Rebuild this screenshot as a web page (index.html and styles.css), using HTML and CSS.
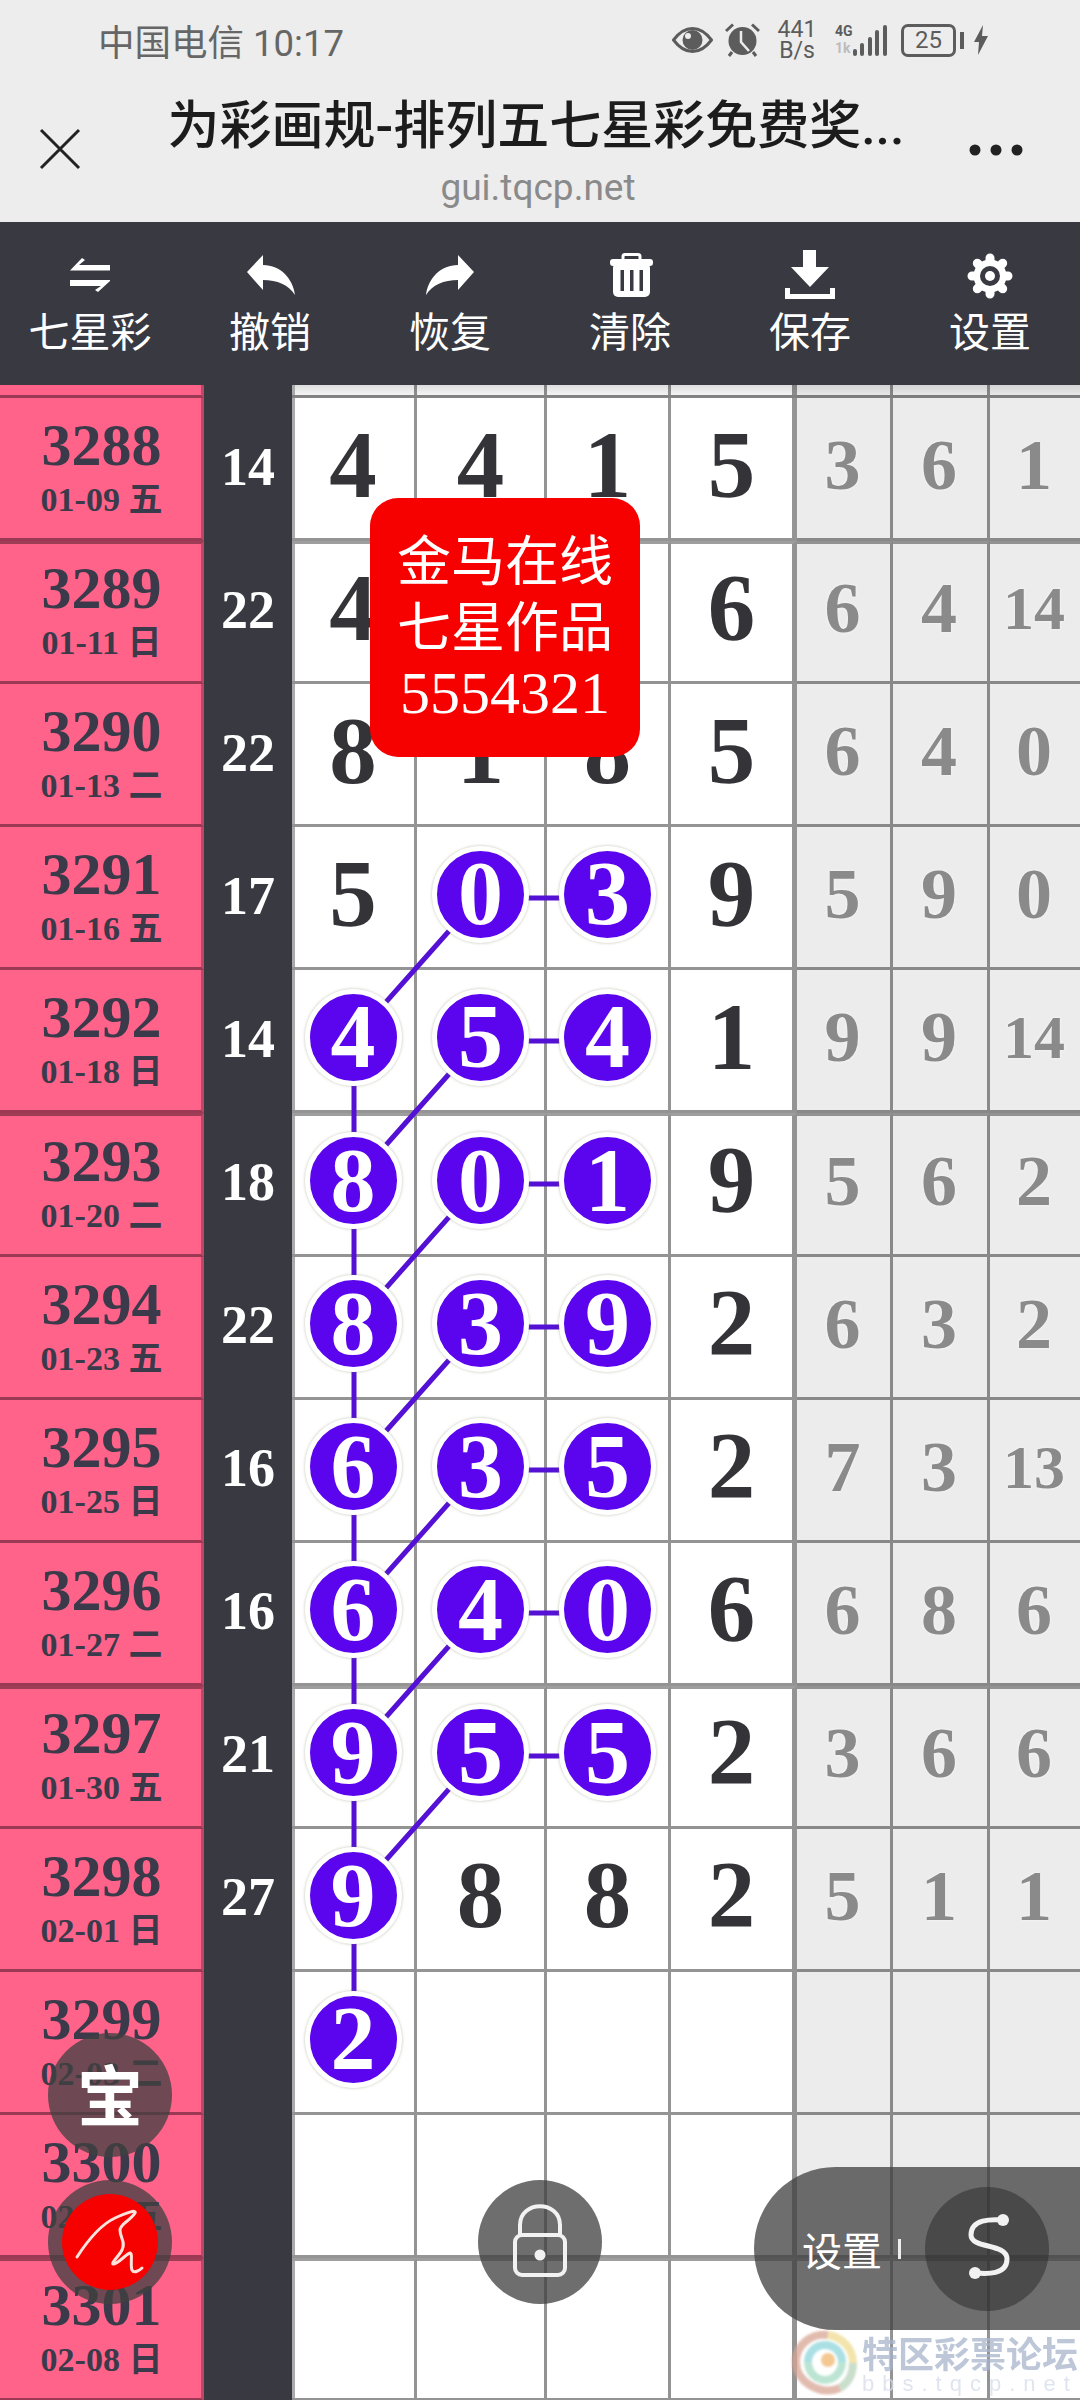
FILE: index.html
```html
<!DOCTYPE html>
<html lang="zh-CN">
<head>
<meta charset="utf-8">
<title>为彩画规</title>
<link rel="stylesheet" href="styles.css">
</head>
<body>

<!-- browser chrome -->
<header class="chrome">
  <div class="status">
    <span class="carrier">中国电信 10:17</span>
    <div class="status-icons">
      <svg class="ic-eye" width="41" height="26" viewBox="0 0 41 26"><path d="M1.5 13C9 3 15 1.5 20.5 1.5S32 3 39.5 13C32 23 26 24.500 20.5 24.500S9 23 1.500 13Z" fill="none" stroke="#5c5c5c" stroke-width="3"/><circle cx="20.500" cy="13" r="10" fill="#5c5c5c"/><circle cx="16" cy="9" r="3" fill="#ededed"/></svg>
      <svg class="ic-alarm" width="35" height="34" viewBox="0 0 35 34"><circle cx="17.500" cy="18" r="14" fill="#5c5c5c"/><path d="M1 8L8 1.500M34 8L27 1.500M7 29L4 33M28 29L31 33" stroke="#5c5c5c" stroke-width="3"/><path d="M16 8V19L24 28" fill="none" stroke="#ededed" stroke-width="2.500"/></svg>
      <div class="speed"><span>441</span><span>B/s</span></div>
      <div class="net">
        <div class="net-labels"><span>4G</span><span class="faded">1k</span></div>
        <svg width="35" height="32" viewBox="0 0 35 32"><g fill="#5c5c5c"><rect x="0" y="24" width="4" height="7" rx="2"/><rect x="7" y="18" width="4" height="13" rx="2"/><rect x="15" y="12" width="4" height="19" rx="2"/><rect x="22" y="5" width="4" height="26" rx="2"/><rect x="30" y="0" width="4" height="31" rx="2"/></g></svg>
      </div>
      <div class="battery">25</div>
      <div class="battery-nub"></div>
      <svg class="ic-bolt" width="14" height="30" viewBox="0 0 14 30"><path d="M9 0L0 17H5L4 30L14 11H8Z" fill="#5c5c5c"/></svg>
    </div>
  </div>
  <div class="titlebar">
    <div class="bar-side">
      <svg width="42" height="42" viewBox="0 0 42 42"><path d="M2 2L40 40M40 2L2 40" stroke="#222" stroke-width="3"/></svg>
    </div>
    <div class="bar-title">
      <div class="page-title">为彩画规-排列五七星彩免费奖...</div>
      <div class="page-host">gui.tqcp.net</div>
    </div>
    <div class="bar-side">
      <svg width="54" height="12" viewBox="0 0 54 12"><g fill="#222"><circle cx="6" cy="6" r="5.500"/><circle cx="27" cy="6" r="5.500"/><circle cx="48" cy="6" r="5.500"/></g></svg>
    </div>
  </div>
</header>

<!-- toolbar -->
<nav class="toolbar">
  <div class="tool">
    <svg width="60" height="50" viewBox="0 0 60 50"><g transform="translate(10 8)" fill="#fff"><path d="M0 12.500L12 0L15 2L9 7H40V12.500Z"/><path d="M0 22H40V23L28 34L25 32L31 28H0Z"/></g></svg>
    <span>七星彩</span>
  </div>
  <div class="tool">
    <svg width="60" height="50" viewBox="0 0 60 50"><path transform="translate(7 5)" d="M0 17L16 0V10C34 10 46 24 48 40C42 30 30 25 16 25V35Z" fill="#fff"/></svg>
    <span>撤销</span>
  </div>
  <div class="tool">
    <svg width="60" height="50" viewBox="0 0 60 50"><path transform="translate(54 5) scale(-1 1)" d="M0 17L16 0V10C34 10 46 24 48 40C42 30 30 25 16 25V35Z" fill="#fff"/></svg>
    <span>恢复</span>
  </div>
  <div class="tool">
    <svg width="60" height="50" viewBox="0 0 60 50"><g transform="translate(10 3)"><rect x="3" y="10" width="37" height="34" rx="5" fill="#fff"/><rect x="0" y="6" width="43" height="7" rx="3" fill="#fff"/><path d="M13 7V3.500Q13 1.500 15 1.500H28Q30 1.500 30 3.500V7" fill="none" stroke="#fff" stroke-width="3"/><g fill="#393941"><rect x="10.500" y="17" width="3.500" height="21"/><rect x="20" y="17" width="3.500" height="21"/><rect x="29.500" y="17" width="3.500" height="21"/></g></g></svg>
    <span>清除</span>
  </div>
  <div class="tool">
    <svg width="60" height="50" viewBox="0 0 60 50"><g transform="translate(5 0)" fill="#fff"><path d="M18 0H31V17H44L25 37L6 17H18Z"/><path d="M0 38H5V44H45V38H50V49H0Z"/></g></svg>
    <span>保存</span>
  </div>
  <div class="tool">
    <svg width="60" height="50" viewBox="0 0 60 50"><g transform="translate(30 26)"><circle r="16.500" fill="#fff"/><g stroke="#fff" stroke-width="9" stroke-linecap="round"><path d="M0 -18V18M-18 0H18M-12.700 -12.700L12.700 12.700M-12.700 12.700L12.700 -12.700"/></g><circle r="10" fill="#393941"/><circle r="5" fill="#fff"/></g></svg>
    <span>设置</span>
  </div>
</nav>

<!-- chart -->
<main class="board">
  <svg class="links" width="1080" height="2015" viewBox="0 0 1080 2015">
    <path d="M354 653V1655"/>
    <path d="M481 513H608M481 656H608M481 799H608M481 942H608M481 1085H608M481 1228H608M481 1371H608"/>
    <path d="M354 653L481 510M354 796L481 653M354 939L481 796M354 1082L481 939M354 1225L481 1082M354 1368L481 1225M354 1511L481 1368"/>
  </svg>

  <div class="row stub">
    <div class="issue"></div><div class="sum"></div><div class="cell"></div><div class="cell"></div><div class="cell"></div><div class="cell edge"></div><div class="cell tail"></div><div class="cell tail"></div><div class="cell tail end"></div>
  </div>

  <div class="row thick">
    <div class="issue"><b>3288</b><span>01-09 五</span></div><div class="sum">14</div>
    <div class="cell">4</div><div class="cell">4</div><div class="cell">1</div><div class="cell edge">5</div>
    <div class="cell tail">3</div><div class="cell tail">6</div><div class="cell tail end">1</div>
  </div>
  <div class="row">
    <div class="issue"><b>3289</b><span>01-11 日</span></div><div class="sum">22</div>
    <div class="cell">4</div><div class="cell"></div><div class="cell"></div><div class="cell edge">6</div>
    <div class="cell tail">6</div><div class="cell tail">4</div><div class="cell tail end two">14</div>
  </div>
  <div class="row">
    <div class="issue"><b>3290</b><span>01-13 二</span></div><div class="sum">22</div>
    <div class="cell">8</div><div class="cell">1</div><div class="cell">8</div><div class="cell edge">5</div>
    <div class="cell tail">6</div><div class="cell tail">4</div><div class="cell tail end">0</div>
  </div>
  <div class="row">
    <div class="issue"><b>3291</b><span>01-16 五</span></div><div class="sum">17</div>
    <div class="cell">5</div><div class="cell"><span class="ball">0</span></div><div class="cell"><span class="ball">3</span></div><div class="cell edge">9</div>
    <div class="cell tail">5</div><div class="cell tail">9</div><div class="cell tail end">0</div>
  </div>
  <div class="row thick">
    <div class="issue"><b>3292</b><span>01-18 日</span></div><div class="sum">14</div>
    <div class="cell"><span class="ball">4</span></div><div class="cell"><span class="ball">5</span></div><div class="cell"><span class="ball">4</span></div><div class="cell edge">1</div>
    <div class="cell tail">9</div><div class="cell tail">9</div><div class="cell tail end two">14</div>
  </div>
  <div class="row">
    <div class="issue"><b>3293</b><span>01-20 二</span></div><div class="sum">18</div>
    <div class="cell"><span class="ball">8</span></div><div class="cell"><span class="ball">0</span></div><div class="cell"><span class="ball">1</span></div><div class="cell edge">9</div>
    <div class="cell tail">5</div><div class="cell tail">6</div><div class="cell tail end">2</div>
  </div>
  <div class="row">
    <div class="issue"><b>3294</b><span>01-23 五</span></div><div class="sum">22</div>
    <div class="cell"><span class="ball">8</span></div><div class="cell"><span class="ball">3</span></div><div class="cell"><span class="ball">9</span></div><div class="cell edge">2</div>
    <div class="cell tail">6</div><div class="cell tail">3</div><div class="cell tail end">2</div>
  </div>
  <div class="row">
    <div class="issue"><b>3295</b><span>01-25 日</span></div><div class="sum">16</div>
    <div class="cell"><span class="ball">6</span></div><div class="cell"><span class="ball">3</span></div><div class="cell"><span class="ball">5</span></div><div class="cell edge">2</div>
    <div class="cell tail">7</div><div class="cell tail">3</div><div class="cell tail end two">13</div>
  </div>
  <div class="row thick">
    <div class="issue"><b>3296</b><span>01-27 二</span></div><div class="sum">16</div>
    <div class="cell"><span class="ball">6</span></div><div class="cell"><span class="ball">4</span></div><div class="cell"><span class="ball">0</span></div><div class="cell edge">6</div>
    <div class="cell tail">6</div><div class="cell tail">8</div><div class="cell tail end">6</div>
  </div>
  <div class="row">
    <div class="issue"><b>3297</b><span>01-30 五</span></div><div class="sum">21</div>
    <div class="cell"><span class="ball">9</span></div><div class="cell"><span class="ball">5</span></div><div class="cell"><span class="ball">5</span></div><div class="cell edge">2</div>
    <div class="cell tail">3</div><div class="cell tail">6</div><div class="cell tail end">6</div>
  </div>
  <div class="row">
    <div class="issue"><b>3298</b><span>02-01 日</span></div><div class="sum">27</div>
    <div class="cell"><span class="ball">9</span></div><div class="cell">8</div><div class="cell">8</div><div class="cell edge">2</div>
    <div class="cell tail">5</div><div class="cell tail">1</div><div class="cell tail end">1</div>
  </div>
  <div class="row">
    <div class="issue"><b>3299</b><span>02-03 二</span></div><div class="sum"></div>
    <div class="cell"><span class="ball">2</span></div><div class="cell"></div><div class="cell"></div><div class="cell edge"></div>
    <div class="cell tail"></div><div class="cell tail"></div><div class="cell tail end"></div>
  </div>
  <div class="row thick">
    <div class="issue"><b>3300</b><span>02-06 五</span></div><div class="sum"></div>
    <div class="cell"></div><div class="cell"></div><div class="cell"></div><div class="cell edge"></div>
    <div class="cell tail"></div><div class="cell tail"></div><div class="cell tail end"></div>
  </div>
  <div class="row">
    <div class="issue"><b>3301</b><span>02-08 日</span></div><div class="sum"></div>
    <div class="cell"></div><div class="cell"></div><div class="cell"></div><div class="cell edge"></div>
    <div class="cell white"></div><div class="cell white"></div><div class="cell white end"></div>
  </div>
</main>

<!-- things floating over the chart -->
<div class="sticker">金马在线<br>七星作品<br><span>5554321</span></div>

<div class="float float-bao">宝</div>
<div class="float float-sign">
  <svg width="124" height="124" viewBox="0 0 124 124">
    <circle cx="62" cy="62" r="48" fill="#f60000"/>
    <path d="M29 77C40 60 52 45 67 38C78 33 89 29 87 33C83 40 72 44 72 50C72 58 78 62 74 70C71 76 63 83 65 84C69 85 78 74 82 73C85 73 82 86 84 90C86 94 92 90 94 88" fill="none" stroke="#ffe2dc" stroke-width="3" stroke-linecap="round" stroke-linejoin="round"/>
  </svg>
</div>
<div class="float float-lock">
  <svg width="124" height="124" viewBox="0 0 124 124">
    <g fill="none" stroke="#f2f2f2" stroke-width="4">
      <path d="M42 55V45C42 20 82 20 82 45V55"/>
      <rect x="37" y="55" width="50" height="40" rx="7"/>
    </g>
    <circle cx="62" cy="75" r="5.500" fill="#f2f2f2"/>
  </svg>
</div>

<div class="pill">
  <span class="pill-label">设置</span>
  <span class="pill-tick"></span>
  <span class="pill-knob">
    <svg width="124" height="124" viewBox="0 0 124 124">
      <path d="M78 33C66 32 46 32 46 48C46 62 82 56 82 72C82 88 62 87 50 86" fill="none" stroke="#f2f2f2" stroke-width="5" stroke-linecap="round"/>
      <circle cx="78" cy="33" r="6" fill="#f2f2f2"/>
      <circle cx="50" cy="86" r="6" fill="#f2f2f2"/>
    </svg>
  </span>
</div>

<div class="watermark">
  <svg class="mark-logo" width="68" height="66" viewBox="0 0 68 66">
    <g fill="none">
      <path d="M50 58C30 66 6 52 6 32C6 14 22 3 38 5" stroke="#d9a595" stroke-width="8"/>
      <path d="M38 5C52 7 63 18 63 33" stroke="#efdc92" stroke-width="8"/>
      <path d="M63 33C63 44 58 53 50 58" stroke="#b9d3bb" stroke-width="8"/>
      <path d="M52 32C52 22 44 15 35 15C25 15 18 23 18 32" stroke="#8ed6dc" stroke-width="8"/>
      <path d="M18 32C18 42 26 50 35 50C44 50 52 42 52 32" stroke="#a7dcc4" stroke-width="8"/>
    </g>
    <circle cx="38" cy="30" r="7" fill="#f1b66d"/>
  </svg>
  <div class="mark-text">
    <div class="mark-cn">特区彩票论坛</div>
    <div class="mark-en">bbs.tqcp.net</div>
  </div>
</div>

</body>
</html>
```

FILE: styles.css
```css
* { box-sizing: border-box; }

html, body {
  margin: 0;
  padding: 0;
}

body {
  position: relative;
  width: 1080px;
  height: 2400px;
  overflow: hidden;
  background: #fff;
  font-family: "Liberation Serif", "Noto Sans CJK SC", serif;
}

/* browser chrome */
.chrome {
  height: 222px;
  background: #ededed;
  font-family: Roboto, "Noto Sans CJK SC", sans-serif;
}

.status {
  display: flex;
  justify-content: space-between;
  align-items: center;
  height: 80px;
  padding: 0 92px 0 98px;
  color: #666;
}

.carrier { font-size: 36.5px; }

.status-icons {
  display: flex;
  align-items: center;
  color: #5c5c5c;
}

.ic-eye { margin-right: 12px; }
.ic-alarm { margin-right: 18px; }

.speed {
  display: flex;
  flex-direction: column;
  align-items: center;
  width: 38px;
  margin-right: 19px;
  font-size: 23px;
  line-height: 21px;
}

.net {
  display: flex;
  align-items: flex-end;
  width: 53px;
  margin-right: 13px;
}

.net-labels {
  display: flex;
  flex-direction: column;
  width: 18px;
  font-size: 14px;
  font-weight: 700;
  line-height: 17px;
}

.net-labels .faded { color: #bcbcbc; }

.battery {
  width: 55px;
  height: 33px;
  border: 3px solid #5c5c5c;
  border-radius: 7px;
  font-size: 24px;
  line-height: 27px;
  text-align: center;
}

.battery-nub {
  width: 4px;
  height: 17px;
  margin: 0 10px 0 4px;
  background: #5c5c5c;
}

.titlebar {
  display: grid;
  grid-template-columns: 120px 1fr 120px;
  height: 142px;
}

.bar-side {
  display: flex;
  justify-content: center;
  padding-top: 48px;
}

.bar-side:last-child { padding-top: 64px; padding-right: 48px; }

.bar-title {
  padding: 17px 8px 0 0;
  text-align: center;
}

.page-title {
  font-size: 52px;
  font-weight: 500;
  line-height: 60px;
  color: #1c1c1c;
  white-space: nowrap;
}

.page-host {
  margin-top: 9px;
  padding-left: 4px;
  font-size: 37px;
  line-height: 44px;
  color: #8a8a8a;
}

/* toolbar */
.toolbar {
  display: grid;
  grid-template-columns: repeat(6, 180px);
  height: 163px;
  padding-top: 28px;
  background: #393941;
  font-family: "Noto Sans CJK SC", sans-serif;
  color: #fff;
}

.tool {
  display: flex;
  flex-direction: column;
  align-items: center;
}

.tool span {
  margin-top: 4px;
  font-size: 41px;
  line-height: 50px;
}

/* chart */
.board {
  position: relative;
}

.links {
  position: absolute;
  left: 0;
  top: 0;
  z-index: 1;
}

.links path {
  fill: none;
  stroke: #5410d4;
  stroke-width: 5;
}

.row {
  display: grid;
  grid-template-columns: 204px 88px 125px 130px 124px 126px 96px 97px 90px;
  height: 143.1px;
}

.row.stub { height: 13px; }

.issue,
.sum,
.cell {
  display: flex;
  align-items: center;
  justify-content: center;
}

.issue {
  flex-direction: column;
  padding: 0 0 3px 2px;
  background: #ff6389;
  border-right: 3px solid rgba(90, 30, 50, .4);
  border-bottom: 3px solid rgba(90, 30, 50, .6);
  color: #3b3a4a;
}

.issue b {
  font-size: 60px;
  line-height: 58px;
}

.issue span {
  margin-top: 9px;
  font-size: 34px;
  font-weight: 700;
  line-height: 34px;
}

.sum {
  padding-bottom: 6px;
  background: #393941;
  color: #fff;
  font-size: 54px;
  font-weight: 700;
}

.cell {
  padding-bottom: 6px;
  background: #fff;
  border-right: 3px solid rgba(0, 0, 0, .42);
  border-bottom: 3px solid rgba(0, 0, 0, .42);
  color: #333338;
  font-size: 95px;
  font-weight: 700;
  line-height: 1;
}

.row > .cell:nth-child(3) { box-shadow: inset 3px 0 0 #aaa; }

.cell.edge { border-right-width: 5px; }
.cell.end { border-right: 0; }

.cell.tail {
  padding-right: 2px;
  background: #ececec;
  color: #8a8a8a;
  font-size: 72px;
  text-shadow: 0 0 3px #f8f8f8;
}

.cell.two { font-size: 62px; }

/* every fourth row line is double width, half in each row */
.row.thick + .row .issue,
.row.thick + .row .cell { border-top: 3px solid rgba(0, 0, 0, .38); }

.row.thick + .row .cell { padding-bottom: 9px; }
.row.thick + .row .issue { padding-bottom: 6px; }

.stub .cell { background: linear-gradient(#dedede, #f4f4f4); }
.stub .cell.tail { background: linear-gradient(#d4d4d4, #e8e8e8); }

.ball {
  position: relative;
  z-index: 2;
  display: flex;
  align-items: center;
  justify-content: center;
  width: 97px;
  height: 97px;
  border: 5px solid #fff;
  border-radius: 50%;
  background: #5a05ee;
  box-shadow: 0 0 3px rgba(120, 130, 90, .5);
  color: #fff;
  font-size: 90px;
  line-height: 1;
}

/* floating items */
.sticker {
  position: absolute;
  left: 370px;
  top: 498px;
  z-index: 3;
  width: 270px;
  height: 259px;
  padding-top: 27px;
  border-radius: 28px;
  background: #f70000;
  color: #fff;
  font-family: "Noto Sans CJK SC", sans-serif;
  font-size: 54px;
  line-height: 66px;
  text-align: center;
}

.sticker span {
  display: inline-block;
  margin-top: -3px;
  font-family: "Liberation Serif", serif;
  font-size: 60px;
}

.float {
  position: absolute;
  z-index: 4;
  width: 124px;
  height: 124px;
  border-radius: 50%;
  background: rgba(64, 64, 64, .76);
}

.float-bao {
  left: 48px;
  top: 2033px;
  color: #fff;
  font-family: "Noto Sans CJK SC", sans-serif;
  font-size: 66px;
  font-weight: 700;
  line-height: 118px;
  text-align: center;
}

.float-sign { left: 48px; top: 2180px; }
.float-lock { left: 478px; top: 2180px; }

.pill {
  position: absolute;
  left: 754px;
  right: 0;
  top: 2167px;
  z-index: 4;
  display: flex;
  align-items: center;
  height: 163px;
  padding-left: 48px;
  border-radius: 82px 0 0 82px;
  background: rgba(64, 64, 64, .76);
  color: #fff;
}

.pill-label {
  font-family: "Noto Sans CJK SC", sans-serif;
  font-size: 40px;
  line-height: 1;
}

.pill-tick {
  width: 3px;
  height: 20px;
  margin-left: 16px;
  background: #eee;
}

.pill-knob {
  width: 124px;
  height: 124px;
  margin-left: 24px;
  border-radius: 50%;
  background: rgba(40, 40, 40, .5);
}

.watermark {
  position: absolute;
  left: 790px;
  top: 2330px;
  z-index: 3;
  display: flex;
  width: 290px;
  opacity: .75;
}

.mark-logo { filter: blur(1px); }

.mark-text { margin-left: 4px; }

.mark-cn {
  color: #a7b5cc;
  font-family: "Noto Sans CJK SC", sans-serif;
  font-size: 36px;
  font-weight: 700;
  line-height: 44px;
  white-space: nowrap;
}

.mark-en {
  color: #d5dcea;
  font-family: "Liberation Sans", sans-serif;
  font-size: 22px;
  letter-spacing: 8px;
  line-height: 20px;
  white-space: nowrap;
}
```
